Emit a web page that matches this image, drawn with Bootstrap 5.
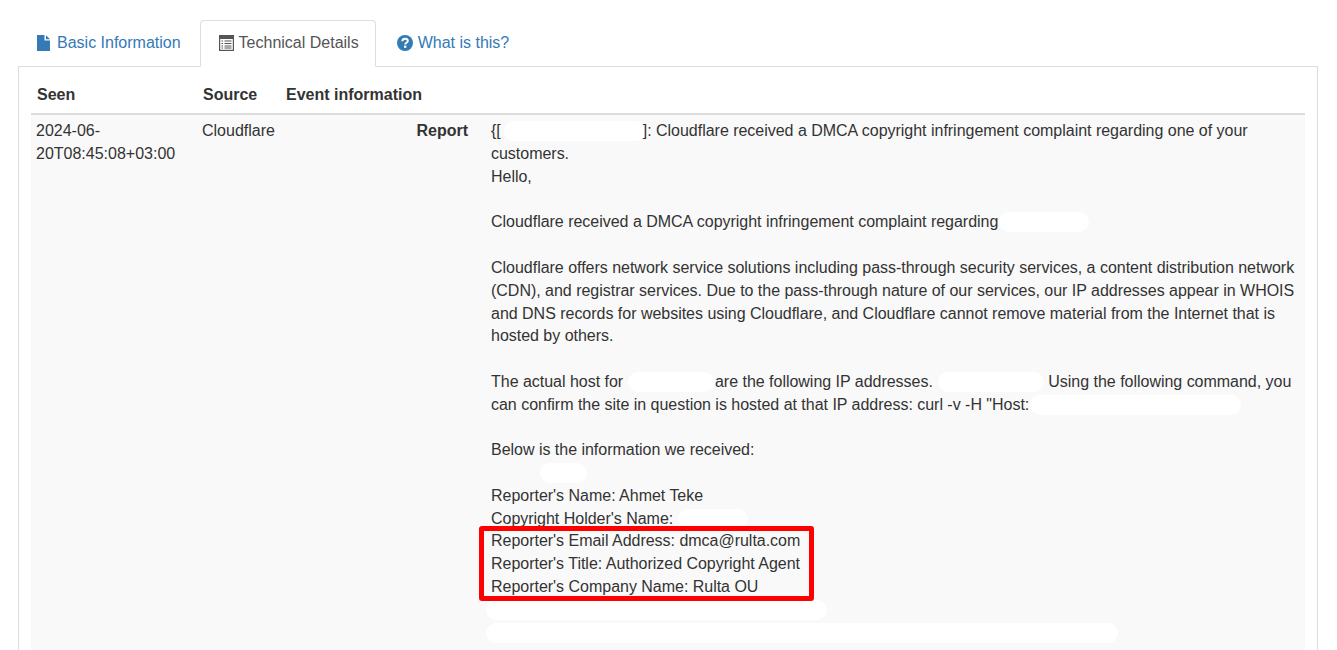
<!DOCTYPE html>
<html lang="en">
<head>
<meta charset="utf-8">
<title>Technical Details</title>
<link href="https://cdn.jsdelivr.net/npm/bootstrap@5.3.0/dist/css/bootstrap.min.css" rel="stylesheet">
<style>
html, body { height: 650px; overflow: hidden; }
body { font-family: "Liberation Sans", Arial, sans-serif; font-size: 16px; line-height: 22.857px; color: #333; background: #fff; }
.page-wrap { padding: 20px 19px 0 18px; }
.tabs-x { border-bottom: 1px solid #ddd; gap: 1px; }
.tabs-x .nav-link { padding: 11px 17px 11px 18px; color: #337ab7; border: 1px solid transparent; border-radius: 4px 4px 0 0; margin-bottom: -1px; display: flex; align-items: center; gap: 5px; line-height: 22.857px; }
.tabs-x .nav-item:first-child .nav-link { gap: 7px; }
.tabs-x .nav-item:last-child .nav-link { padding-left: 19px; }
.tabs-x .nav-link.active { color: #555; background: #fff; border-color: #ddd #ddd #fff; padding-right: 16px; }
.pane-x { border: 1px solid #ddd; border-top: 0; padding: 8px 12px 0 12px; height: 600px; }
.tbl-x { table-layout: fixed; width: 100%; margin: 0; border-collapse: collapse; color: #333; }
.tbl-x th { padding: 9px 7px 6px; font-weight: 700; border-bottom: 2px solid #ddd; vertical-align: bottom; }
.tbl-x th:first-child { padding-left: 6px; }
.tbl-x td { padding: 5.65px 6px 30px; background: #f9f9f9; vertical-align: top; }
.tbl-x td:first-child { padding-left: 5px; }
.col-seen { width: 165px; }
.col-src { width: 83px; }
.evt-term { width: 183px; font-weight: 700; flex: none; }
.evt-body { margin: 0 0 0 23px; width: 806px; line-height: 22.78px; letter-spacing: -0.02px; }
.redact { display: inline-block; height: 20px; background: #fff; border-radius: 10px; vertical-align: -5px; }
.rd-a { width: 142px; margin-left: 3px; margin-right: -3px; }
.rd-b { width: 90px; margin-left: -4px; }
.rd-c { width: 86px; margin-right: -3px; }
.rd-d { width: 106px; margin-left: 5px; }
.rd-e { width: 211px; margin-left: 1px; }
.rd-f { width: 47px; margin-left: 49px; }
.rd-g { width: 70px; }
.rd-h { width: 341px; margin-left: -5px; }
.rd-i { width: 632px; margin-left: -5px; }
.hilite { display: block; position: relative; width: 309px; white-space: nowrap; }
.hilite::after { content: ""; position: absolute; inset: -4px -14px -2px -12px; border: 5px solid #f00; border-radius: 3px; }
</style>
</head>
<body>
<div class="page-wrap">
  <ul class="nav tabs-x">
    <li class="nav-item"><a class="nav-link" href="#">
      <svg width="13" height="16" viewBox="0 0 13 16" fill="#337ab7" aria-hidden="true"><path d="M0 0H7.5V5.5H13V16H0Z"/><path d="M9 0.3L13 4.3H9Z"/></svg>
      Basic Information</a></li>
    <li class="nav-item"><a class="nav-link active" href="#">
      <svg width="15" height="16" viewBox="0 0 15 16" fill="none" stroke="#555" aria-hidden="true"><rect x="0.6" y="0.6" width="13.8" height="14.8" stroke-width="1.2"/><rect x="0.5" y="0.5" width="14" height="3" fill="#555"/><path d="M2.5 6H4M2.5 8.5H4M2.5 11H4M2.5 13H4M5.5 6H12.5M5.5 8.5H12.5M5.5 11H12.5M5.5 13H12.5" stroke-width="1.1"/></svg>
      Technical Details</a></li>
    <li class="nav-item"><a class="nav-link" href="#">
      <svg width="16" height="16" viewBox="0 0 16 16" aria-hidden="true"><circle cx="8" cy="8" r="8" fill="#337ab7"/><path d="M5.3 6.2C5.4 4.6 6.6 3.7 8.1 3.7C9.7 3.7 10.8 4.7 10.8 6C10.8 7.7 8.2 7.8 8.2 9.4" fill="none" stroke="#fff" stroke-width="2"/><rect x="7" y="10.6" width="2.4" height="2.2" fill="#fff"/></svg>
      What is this?</a></li>
  </ul>
  <div class="pane-x">
    <table class="tbl-x">
      <colgroup><col class="col-seen"><col class="col-src"><col></colgroup>
      <thead><tr><th>Seen</th><th>Source</th><th>Event information</th></tr></thead>
      <tbody><tr>
        <td>2024-06-20T08:45:08+03:00</td>
        <td>Cloudflare</td>
        <td>
          <dl class="d-flex m-0">
            <dt class="evt-term text-end">Report</dt>
            <dd class="evt-body">
              {[<span class="redact rd-a"></span>]: Cloudflare received a DMCA copyright infringement complaint regarding one of your customers.<br>
              Hello,<br><br>
              Cloudflare received a DMCA copyright infringement complaint regarding <span class="redact rd-b"></span><br><br>
              Cloudflare offers network service solutions including pass-through security services, a content distribution network (CDN), and registrar services. Due to the pass-through nature of our services, our IP addresses appear in WHOIS and DNS records for websites using Cloudflare, and Cloudflare cannot remove material from the Internet that is hosted by others.<br><br>
              The actual host for <span class="redact rd-c"></span> are the following IP addresses.<span class="redact rd-d"></span> Using the following command, you can confirm the site in question is hosted at that IP address: curl -v -H "Host:<span class="redact rd-e"></span><br><br>
              Below is the information we received:<br>
              <span class="redact rd-f"></span><br>
              Reporter's Name: Ahmet Teke<br>
              Copyright Holder's Name: <span class="redact rd-g"></span>
              <span class="hilite">Reporter's Email Address: dmca@rulta.com<br>
              Reporter's Title: Authorized Copyright Agent<br>
              Reporter's Company Name: Rulta OU</span>
              <span class="redact rd-h"></span><br>
              <span class="redact rd-i"></span>
            </dd>
          </dl>
        </td>
      </tr></tbody>
    </table>
  </div>
</div>
<script src="https://cdn.jsdelivr.net/npm/bootstrap@5.3.0/dist/js/bootstrap.bundle.min.js"></script>
</body>
</html>
